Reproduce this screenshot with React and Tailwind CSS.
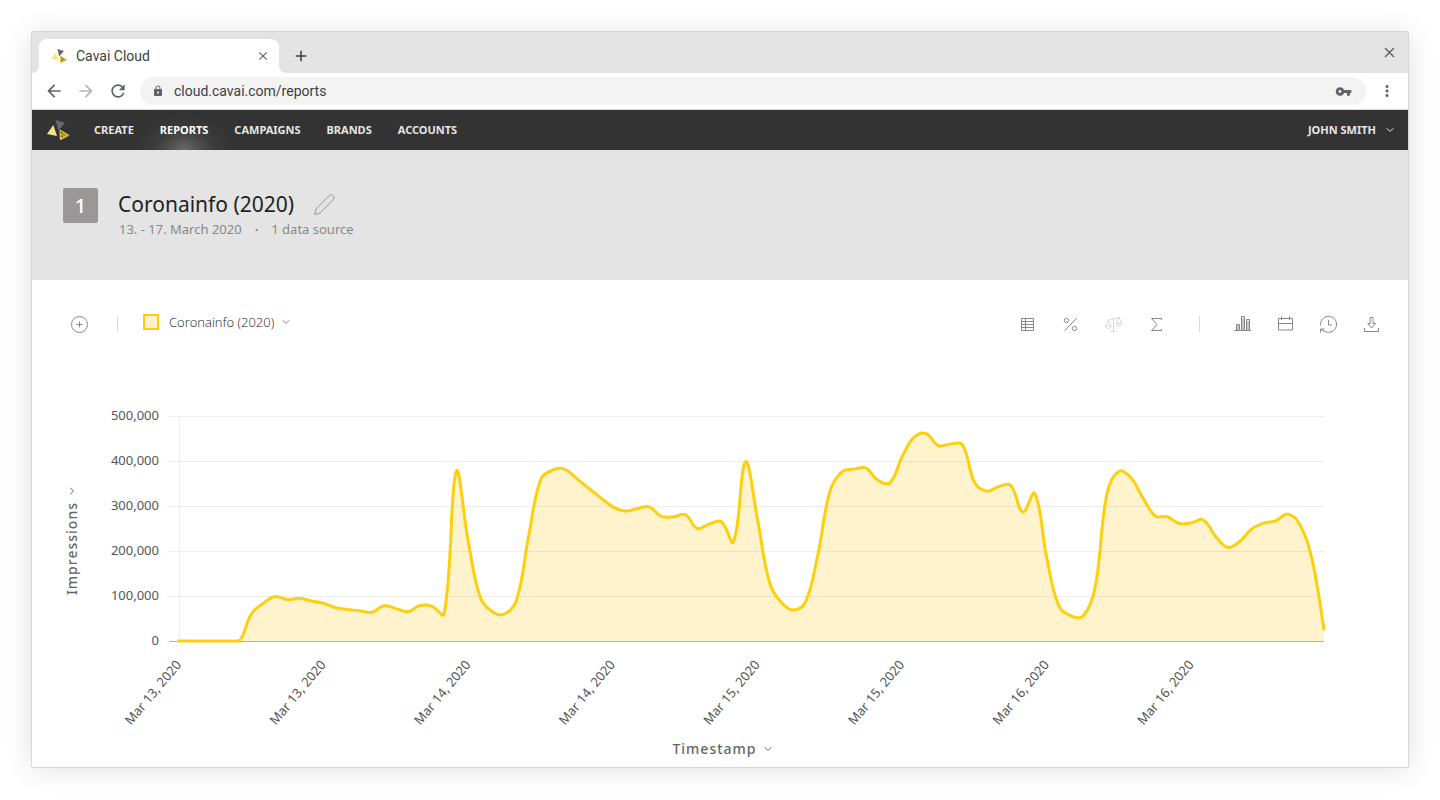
import React, { useState } from 'react';
import { ChevronDown } from 'lucide-react';
import {
  MdAdd,
  MdArrowBack,
  MdArrowForward,
  MdClose,
  MdLock,
  MdMoreVert,
  MdRefresh,
  MdVpnKey,
} from 'react-icons/md';

const navItems = ['Create', 'Reports', 'Campaigns', 'Brands', 'Accounts'];

// impressions per hour, in thousands
const impressions = [
  0, 0, 0, 0, 0, 0, 60, 84, 99, 92, 95, 89,
  84, 74, 70, 67, 64, 78, 72, 65, 79, 77, 60, 377,
  221, 97, 65, 60, 91, 232, 358, 380, 382, 361, 339, 318,
  298, 289, 294, 298, 277, 276, 281, 250, 260, 265, 220, 398,
  270, 130, 85, 69, 88, 191, 332, 376, 382, 384, 357, 352,
  410, 453, 461, 434, 438, 436, 353, 333, 343, 346, 287, 328,
  184, 78, 56, 55, 118, 328, 377, 362, 317, 278, 276, 261,
  263, 269, 233, 208, 221, 249, 262, 267, 282, 258, 182, 27,
];

const yTicks = [500, 400, 300, 200, 100, 0];

const xTicks = [
  'Mar 13, 2020',
  'Mar 13, 2020',
  'Mar 14, 2020',
  'Mar 14, 2020',
  'Mar 15, 2020',
  'Mar 15, 2020',
  'Mar 16, 2020',
  'Mar 16, 2020',
];

const plot = { left: 87, right: 1232, top: 16, bottom: 241 };

const xAt = (i) => plot.left + (i * (plot.right - plot.left)) / (impressions.length - 1);
const yAt = (v) => plot.bottom - (v * (plot.bottom - plot.top)) / 500;

// bezier handles on both sides of a point, weighted by the distance to its neighbours
const handles = (prev, point, next, tension = 0.4) => {
  const before = Math.hypot(point.x - prev.x, point.y - prev.y);
  const after = Math.hypot(next.x - point.x, next.y - point.y);
  const a = (tension * before) / (before + after || 1);
  const b = (tension * after) / (before + after || 1);
  const clampY = (y) => Math.max(plot.top, Math.min(plot.bottom, y));
  return {
    left: `${point.x - a * (next.x - prev.x)},${clampY(point.y - a * (next.y - prev.y))}`,
    right: `${point.x + b * (next.x - prev.x)},${clampY(point.y + b * (next.y - prev.y))}`,
  };
};

const buildLine = (values) => {
  const points = values.map((v, i) => ({ x: xAt(i), y: yAt(v) }));
  const controls = points.map((point, i) =>
    handles(points[i - 1] || point, point, points[i + 1] || point)
  );

  return points
    .map(({ x, y }, i) =>
      i === 0 ? `M${x},${y}` : `C${controls[i - 1].right} ${controls[i].left} ${x},${y}`
    )
    .join('');
};

const Logo = ({ className }) => (
  <svg viewBox="0 0 22 20" className={className} aria-hidden="true">
    <path d="M8.7 0 18 2.7 11.3 10.7Z" fill="#65696d" />
    <path d="M6.3 5 10 16 0 14Z" fill="#fde281" />
    <path d="M13 10 22 15.3 13.3 19.7Z" fill="#6b5f2e" />
    <path
      d="M13 10 22 15.3 13.3 19.7ZM13.2 13 18 17.4M13.2 16.4 15.6 18.6M15.4 11.4 19.6 16.2M13.2 16 17 12.6M13.4 19.4 20 14.4"
      fill="none"
      stroke="#f6cf3b"
      strokeWidth="1"
    />
  </svg>
);

const Icon = ({ children }) => (
  <svg
    viewBox="0 0 19 19"
    className="block h-[19px] w-[19px]"
    fill="none"
    stroke="currentColor"
    strokeWidth="1"
    aria-hidden="true"
  >
    {children}
  </svg>
);

const tools = [
  {
    label: 'Table',
    icon: (
      <Icon>
        <path d="M3.5 3.5h12v12h-12zM7.5 3.5v12M3.5 6.5h12M3.5 9.5h12M3.5 12.5h12" />
      </Icon>
    ),
  },
  {
    label: 'Percent',
    icon: (
      <Icon>
        <path d="M15.5 3.5 3.5 15.5" />
        <circle cx="5.5" cy="5.5" r="2.2" />
        <circle cx="13.5" cy="13.5" r="2.2" />
      </Icon>
    ),
  },
  {
    label: 'Compare',
    disabled: true,
    icon: (
      <Icon>
        <path d="M9.5 2.5v14M6.5 16.5h6M3 5.5 9.5 4 16.5 2M4 5.5 1.5 11M4 5.5 7 11M15 2.5 12.5 8.5M15 2.5 17.8 8.5M1.2 11h6c-.2 3.2-5.8 3.2-6 0ZM12.2 8.5h5.8c-.2 3.2-5.6 3.2-5.8 0Z" />
      </Icon>
    ),
  },
  {
    label: 'Sum',
    icon: (
      <Icon>
        <path d="M14.5 5V3.5h-10l5.500 6-5.500 6h10V14" />
      </Icon>
    ),
  },
  null,
  {
    label: 'Chart type',
    icon: (
      <Icon>
        <path d="M1 15.5h17M3.5 15.5v-6h3v6M8.5 15.5v-14h3v14M13.5 15.5v-11h3v11M5 10v5M10 3v12M15 6v9" />
      </Icon>
    ),
  },
  {
    label: 'Date range',
    icon: (
      <Icon>
        <path d="M2.5 3.5h14v11.5h-14zM2.5 8.5h14M5.5 1.5v3.5M13.5 1.5v3.5" />
      </Icon>
    ),
  },
  {
    label: 'History',
    icon: (
      <Icon>
        <path d="M1.6 10.5A8 8 0 1 1 4.2 15.3M1.5 17.5v-3.500h4M2 14.2l3 2.3M9.5 5v5h3.5" />
      </Icon>
    ),
  },
  {
    label: 'Download',
    icon: (
      <Icon>
        <path d="M2.5 13v3.500h14V13M8.200 2.5h2.8v6h2.500l-3.900 4.500-3.900-4.500h2.500z" />
      </Icon>
    ),
  },
];

const BrowserChrome = () => (
  <div>
    <div className="flex h-[41px] items-end bg-[#e3e3e3] pr-[10px]">
      <svg viewBox="0 0 7 7" className="h-[7px] w-[7px]" aria-hidden="true">
        <path d="M7 0v7H0a7 7 0 0 0 7-7Z" fill="#fff" />
      </svg>
      <div className="flex h-[34px] w-60 items-center rounded-t-lg bg-white pb-px pl-3 pr-[9px]">
        <Logo className="h-[14px] w-4" />
        <span className="ml-[9px] flex-1 font-[Roboto] text-sm text-[#3c4043]">Cavai Cloud</span>
        <button aria-label="Close tab" className="text-[#5f6368]">
          <MdClose size={14} />
        </button>
      </div>
      <svg viewBox="0 0 7 7" className="h-[7px] w-[7px]" aria-hidden="true">
        <path d="M0 0v7h7a7 7 0 0 1-7-7Z" fill="#fff" />
      </svg>
      <button aria-label="New tab" className="mb-2 ml-[6px] text-[#3c4043]">
        <MdAdd size={18} />
      </button>
      <button aria-label="Close window" className="mb-3 ml-auto text-[#5f6368]">
        <MdClose size={17} />
      </button>
    </div>

    <div className="flex h-[37px] items-center border-b border-[#dcdcdc] bg-white px-3">
      <button aria-label="Back" className="text-[#5f6368]">
        <MdArrowBack size={20} />
      </button>
      <button aria-label="Forward" className="ml-3 text-[#b4b6b8]">
        <MdArrowForward size={20} />
      </button>
      <button aria-label="Reload" className="ml-3 text-[#5f6368]">
        <MdRefresh size={20} />
      </button>
      <div className="ml-3 flex h-7 flex-1 items-center rounded-full bg-[#f3f3f3] px-3">
        <MdLock size={12} className="text-[#5f6368]" />
        <input
          aria-label="Address"
          defaultValue="cloud.cavai.com/reports"
          className="ml-[10px] flex-1 bg-transparent font-[Roboto] text-sm text-[#3c4043] outline-none"
        />
        <MdVpnKey size={17} className="mr-[2px] text-[#5f6368]" />
      </div>
      <button aria-label="Browser menu" className="ml-3 text-[#5f6368]">
        <MdMoreVert size={18} />
      </button>
    </div>
  </div>
);

const NavBar = () => (
  <header className="flex h-10 items-stretch bg-[#333333] pl-[15px] pr-3 text-[11px] font-bold uppercase text-[#e6e6e6]">
    <a href="#home" aria-label="Home" className="flex items-center">
      <Logo className="h-5 w-[22px]" />
    </a>
    <nav className="ml-3 flex">
      {navItems.map((item) => (
        <a
          key={item}
          href={`#${item.toLowerCase()}`}
          className={
            item === 'Reports'
              ? '-mx-3 flex items-center bg-[radial-gradient(ellipse_50px_34px_at_50%_100%,#6a6a6a_0%,#484848_40%,#3d3d3d_60%,#333333_100%)] px-[25px] text-white'
              : 'flex items-center px-[13px]'
          }
        >
          {item}
        </a>
      ))}
    </nav>
    <button className="ml-auto flex items-center gap-2 uppercase">
      John Smith
      <ChevronDown size={12} strokeWidth={2} />
    </button>
  </header>
);

const ReportHeader = () => (
  <section className="flex h-[130px] items-start bg-[#e4e4e4] pl-[31px] pt-[38px]">
    <div className="flex h-[35px] w-[35px] items-center justify-center rounded-xs bg-[#999797] text-xl font-medium text-white">
      1
    </div>
    <div className="ml-5">
      <div className="flex items-center gap-5">
        <h1 className="text-[21px] leading-8 text-[#222222]">Coronainfo (2020)</h1>
        <button aria-label="Rename report" className="text-[#999999]">
          <svg viewBox="0 0 21 21" className="h-[21px] w-[21px]" fill="none" stroke="currentColor" aria-hidden="true">
            <path d="M.6 20.4 2 15 15.3 1.6a2.5 2.5 0 0 1 4 .2 2.6 2.6 0 0 1 0 3.700L6 19Z" strokeLinejoin="round" />
          </svg>
        </button>
      </div>
      <p className="flex gap-[13px] pl-px text-[13px] leading-[18px] text-[#888888]">
        <span>13. - 17. March 2020</span>
        <span className="font-bold">·</span>
        <span>1 data source</span>
      </p>
    </div>
  </section>
);

const Toolbar = () => (
  <div className="flex items-center pl-[38px] pr-[27px] pt-8 text-[#888888]">
    <button aria-label="Add data source">
      <Icon>
        <circle cx="9.5" cy="9.5" r="8" />
        <path d="M9.5 6.5v6M6.5 9.5h6" />
      </Icon>
    </button>
    <span className="ml-7 h-4 w-px bg-[#d8d8d8]" />
    <button className="ml-[25px] flex items-center pb-1 font-['Open_Sans','Noto_Sans',sans-serif] text-[13px] leading-5 font-light text-[#222222]">
      <span className="h-4 w-4 border-2 border-[#fecc0b] bg-[#fef3cc]" />
      <span className="ml-[10px]">Coronainfo (2020)</span>
      <ChevronDown size={12} strokeWidth={2} className="ml-[6px] text-[#888888]" />
    </button>
    <div className="ml-auto flex items-center gap-6">
      {tools.map((tool) =>
        tool ? (
          <button
            key={tool.label}
            aria-label={tool.label}
            disabled={tool.disabled}
            className="disabled:text-[#d9d9d5]"
          >
            {tool.icon}
          </button>
        ) : (
          <span key="divider" className="flex w-[19px] justify-center">
            <span className="h-4 w-px bg-[#d8d8d8]" />
          </span>
        )
      )}
    </div>
  </div>
);

const Chart = () => {
  const line = buildLine(impressions);

  return (
    <svg viewBox="0 0 1288 330" className="block min-w-0 flex-1" role="img" aria-label="Impressions over time">
      <path
        d={`${line}L${plot.right},${plot.bottom}L${plot.left},${plot.bottom}Z`}
        fill="#fef3cc"
      />
      <g shapeRendering="crispEdges">
        {yTicks.map((tick) => (
          <path
            key={tick}
            d={`M${plot.left - 10},${yAt(tick) + 0.5}H${plot.right}`}
            stroke={tick === 0 ? '#b0b0b0' : '#000000'}
            strokeOpacity={tick === 0 ? 1 : 0.07}
          />
        ))}
        <path d={`M${plot.left + 0.5},${plot.top}V${plot.bottom}`} stroke="#000000" strokeOpacity="0.07" />
      </g>
      <path d={line} fill="none" stroke="#fecf0c" strokeWidth="3" strokeLinecap="square" strokeLinejoin="round" />
      <g fill="#555555" fontSize="13" textAnchor="end">
        {yTicks.map((tick) => (
          <text key={tick} x={plot.left - 20} y={yAt(tick) + 4}>
            {(tick * 1000).toLocaleString('en-US')}
          </text>
        ))}
        {xTicks.map((label, i) => (
          <text key={i} transform={`translate(${xAt(i * 12) + 3} 265) rotate(-50)`}>
            {label}
          </text>
        ))}
      </g>
    </svg>
  );
};

const App = () => {
  const [open, setOpen] = useState(null);
  const toggle = (axis) => setOpen(open === axis ? null : axis);

  return (
    <div className="min-h-screen bg-white p-[31px] font-['Noto_Sans',sans-serif]">
      <div className="rounded-xs border border-[#d6d6d6] bg-white shadow-[0_2px_28px_rgba(0,0,0,0.12)]">
        <BrowserChrome />
        <NavBar />
        <main>
          <ReportHeader />
          <Toolbar />
          <div className="flex px-7 pt-16">
            <div className="flex w-8 items-center pl-[2px]">
              <button
                aria-expanded={open === 'y'}
                onClick={() => toggle('y')}
                className="mb-[50px] flex rotate-180 items-center gap-[5px] text-sm font-medium tracking-[1px] text-[#666666] [writing-mode:vertical-rl]"
              >
                Impressions
                <ChevronDown size={12} strokeWidth={2} className="rotate-90" />
              </button>
            </div>
            <Chart />
          </div>
          <div className="flex justify-center pb-1 pl-[6px] pt-[5px]">
            <button
              aria-expanded={open === 'x'}
              onClick={() => toggle('x')}
              className="flex items-center gap-[5px] text-sm leading-7 font-medium tracking-[1px] text-[#666666]"
            >
              Timestamp
              <ChevronDown size={12} strokeWidth={2} />
            </button>
          </div>
        </main>
      </div>
    </div>
  );
};

export default App;
